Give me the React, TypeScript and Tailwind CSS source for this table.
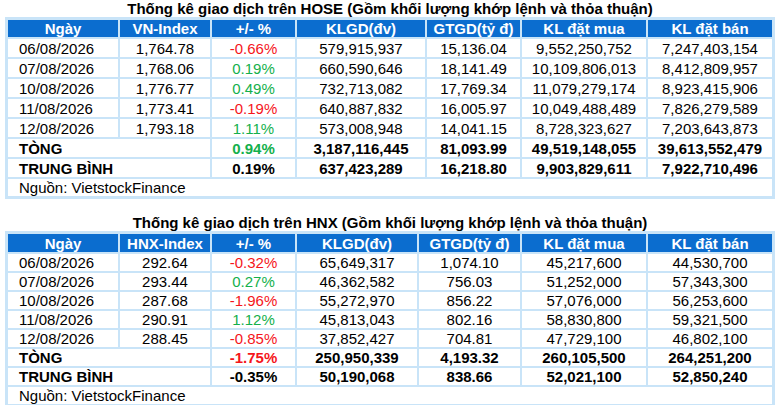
import React from "react";

type Row = { d: string; idx: string; pct: string; up: boolean; kl: string; gt: string; mua: string; ban: string };

const hose: Row[] = [
  { d: "06/08/2026", idx: "1,764.78", pct: "-0.66%", up: false, kl: "579,915,937", gt: "15,136.04", mua: "9,552,250,752", ban: "7,247,403,154" },
  { d: "07/08/2026", idx: "1,768.06", pct: "0.19%", up: true, kl: "660,590,646", gt: "18,141.49", mua: "10,109,806,013", ban: "8,412,809,957" },
  { d: "10/08/2026", idx: "1,776.77", pct: "0.49%", up: true, kl: "732,713,082", gt: "17,769.34", mua: "11,079,279,174", ban: "8,923,415,906" },
  { d: "11/08/2026", idx: "1,773.41", pct: "-0.19%", up: false, kl: "640,887,832", gt: "16,005.97", mua: "10,049,488,489", ban: "7,826,279,589" },
  { d: "12/08/2026", idx: "1,793.18", pct: "1.11%", up: true, kl: "573,008,948", gt: "14,041.15", mua: "8,728,323,627", ban: "7,203,643,873" },
];

const hnx: Row[] = [
  { d: "06/08/2026", idx: "292.64", pct: "-0.32%", up: false, kl: "65,649,317", gt: "1,074.10", mua: "45,217,600", ban: "44,530,700" },
  { d: "07/08/2026", idx: "293.44", pct: "0.27%", up: true, kl: "46,362,582", gt: "756.03", mua: "51,252,000", ban: "57,343,300" },
  { d: "10/08/2026", idx: "287.68", pct: "-1.96%", up: false, kl: "55,272,970", gt: "856.22", mua: "57,076,000", ban: "56,253,600" },
  { d: "11/08/2026", idx: "290.91", pct: "1.12%", up: true, kl: "45,813,043", gt: "802.16", mua: "58,830,800", ban: "59,321,500" },
  { d: "12/08/2026", idx: "288.45", pct: "-0.85%", up: false, kl: "37,852,427", gt: "704.81", mua: "47,729,100", ban: "46,802,100" },
];

type Summary = { pct: string; cls: string; kl: string; gt: string; mua: string; ban: string };

function Table({
  title,
  indexName,
  rows,
  total,
  avg,
  cols,
  headH,
  rowH,
  sumH,
}: {
  title: string;
  indexName: string;
  rows: Row[];
  total: Summary;
  avg: Summary;
  cols: string;
  headH: string;
  rowH: string;
  sumH: string;
}) {
  const head = ["Ngày", indexName, "+/- %", "KLGD(đv)", "GTGD(tỷ đ)", "KL đặt mua", "KL đặt bán"];
  const cell = `bg-white flex items-center justify-center ${rowH}`;
  const sumCell = `bg-white flex items-center justify-center font-bold ${sumH}`;
  return (
    <div>
      <div className="h-[17px] flex items-end justify-center font-bold text-[15px] leading-[17px] text-black">{title}</div>
      <div className={`grid ${cols} gap-[2px] p-[3px] bg-[#c9e4f8]`}>
        {head.map((h) => (
          <div key={h} className={`bg-[#0b6dcf] text-white font-bold flex items-center justify-center ${headH}`}>
            {h}
          </div>
        ))}
        {rows.map((r) => (
          <React.Fragment key={r.d}>
            <div className={`bg-white flex items-center pl-[11px] ${rowH}`}>{r.d}</div>
            <div className={cell}>{r.idx}</div>
            <div className={`${cell} ${r.up ? "text-[#14b04c]" : "text-[#f5161b]"}`}>{r.pct}</div>
            <div className={cell}>{r.kl}</div>
            <div className={cell}>{r.gt}</div>
            <div className={cell}>{r.mua}</div>
            <div className={cell}>{r.ban}</div>
          </React.Fragment>
        ))}
        <div className={`col-span-2 bg-white flex items-center pl-[11px] font-bold ${sumH}`}>TÒNG</div>
        <div className={`${sumCell} ${total.cls}`}>{total.pct}</div>
        <div className={sumCell}>{total.kl}</div>
        <div className={sumCell}>{total.gt}</div>
        <div className={sumCell}>{total.mua}</div>
        <div className={sumCell}>{total.ban}</div>
        <div className={`col-span-2 bg-white flex items-center pl-[11px] font-bold ${sumH}`}>TRUNG BÌNH</div>
        <div className={`${sumCell} ${avg.cls}`}>{avg.pct}</div>
        <div className={sumCell}>{avg.kl}</div>
        <div className={sumCell}>{avg.gt}</div>
        <div className={sumCell}>{avg.mua}</div>
        <div className={sumCell}>{avg.ban}</div>
        <div className="col-span-7 bg-white flex items-center pl-[11px] h-[17px]">Nguồn: VietstockFinance</div>
      </div>
    </div>
  );
}

export default function App() {
  return (
    <div
      className="w-[776px] h-[405px] overflow-hidden bg-white text-black text-[15px] leading-[17px] pl-[5px] pr-[1px]"
      style={{ fontFamily: '"Liberation Sans", Arial, sans-serif' }}
    >
      <Table
        title="Thống kê giao dịch trên HOSE (Gồm khối lượng khớp lệnh và thỏa thuận)"
        indexName="VN-Index"
        rows={hose}
        total={{ pct: "0.94%", cls: "text-[#14b04c]", kl: "3,187,116,445", gt: "81,093.99", mua: "49,519,148,055", ban: "39,613,552,479" }}
        avg={{ pct: "0.19%", cls: "", kl: "637,423,289", gt: "16,218.80", mua: "9,903,829,611", ban: "7,922,710,496" }}
        cols="grid-cols-[110px_90px_83px_128px_93px_124px_124px]"
        headH="h-[17px]"
        rowH="h-[18px]"
        sumH="h-[18px]"
      />
      <div className="h-[15px]" />
      <Table
        title="Thống kê giao dịch trên HNX (Gồm khối lượng khớp lệnh và thỏa thuận)"
        indexName="HNX-Index"
        rows={hnx}
        total={{ pct: "-1.75%", cls: "text-[#f5161b]", kl: "250,950,339", gt: "4,193.32", mua: "260,105,500", ban: "264,251,200" }}
        avg={{ pct: "-0.35%", cls: "", kl: "50,190,068", gt: "838.66", mua: "52,021,100", ban: "52,850,240" }}
        cols="grid-cols-[110px_90px_83px_120px_101px_124px_124px]"
        headH="h-[18px]"
        rowH="h-[17px]"
        sumH="h-[17px]"
      />
    </div>
  );
}
